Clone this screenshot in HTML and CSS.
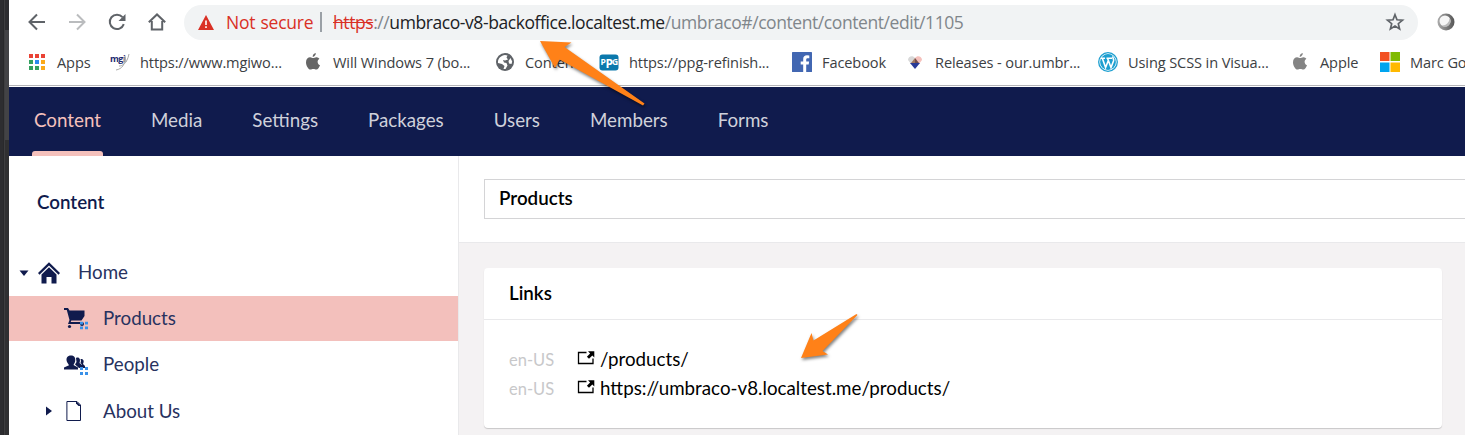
FILE: index.html
```html
<!DOCTYPE html>
<html lang="en">
<head>
<meta charset="utf-8">
<title>Products - Umbraco</title>
<link rel="stylesheet" href="styles.css">
</head>
<body>
<svg class="defs" width="0" height="0">
  <symbol id="apple" viewBox="0 0 14 18"><path d="M9.8 0C9.900 1.900 8.600 3.700 6.700 3.900 6.500 2 8 .3 9.800 0ZM7.100 5.100C8 5.100 9 4.100 10.600 4.200 11.800 4.300 12.800 4.800 13.400 5.700 10.800 7.300 11.100 10.900 14 12.200 13.300 14.300 11.800 16.500 10.400 16.500 9.200 16.500 8.700 15.900 7.400 15.900 6 15.900 5.500 16.600 4.300 16.600 2.600 16.600 0 13 0 9.300 0 6 2.100 4.300 4.100 4.300 5.500 4.300 6.400 5.100 7.100 5.100Z"/></symbol>
  <symbol id="open" viewBox="0 0 18 14"><path d="M9.500 1.500H1.500V12.500H16V7.500" fill="none" stroke="currentColor" stroke-width="1.300"/><path d="M11 .3H17.300V6.500L15.300 4.600 12 7.700 9.900 5.700 13.100 2.500Z"/></symbol>
  <symbol id="dots" viewBox="0 0 8 8"><path d="M0 0H3V3H0ZM5 0H8V3H5ZM0 5H3V8H0ZM5 5H8V8H5Z"/></symbol>
</svg>
<div class="screen">
  <div class="edge"><div class="edge-dark"></div><div class="edge-light"></div></div>
  <div class="window">
    <div class="toolbar">
      <svg class="nav-icon" viewBox="0 0 20 20"><path d="M18 10H3M10 2.500 2.500 10 10 17.500"/></svg>
      <svg class="nav-icon disabled" viewBox="0 0 20 20"><path d="M2 10H17M10 2.500 17.500 10 10 17.500"/></svg>
      <svg class="nav-icon" viewBox="0 0 20 20"><path d="M16.800 12.200A7.200 7.200 0 1 1 15.500 5.200"/><path class="solid" d="M18.500 2V9H11.500Z"/></svg>
      <svg class="nav-icon" viewBox="0 0 20 20"><path d="M1.800 10.300 10 2.500 18.200 10.300M4.800 9V17.600H15.200V9"/></svg>
      <div class="address">
        <svg class="warn" width="16" height="15" viewBox="0 0 16 15"><path d="M8 0 16 15H0Z" fill="#d93025"/><path d="M7.200 5.500H8.800V10H7.200ZM7.200 11.300H8.800V13H7.200Z" fill="#fff"/></svg>
        <span class="insecure">Not secure</span>
        <span class="divider"></span>
        <span class="url"><span class="scheme">https</span><span class="sep">://</span><span class="host">umbraco-v8-backoffice.localtest.me</span><span class="path">/umbraco#/content/content/edit/1105</span></span>
        <svg class="star" width="20" height="20" viewBox="0 0 20 20"><path d="M10 2.700 12 7.800 17.500 8.200 13.300 11.700 14.600 17 10 14.100 5.400 17 6.700 11.700 2.500 8.200 8 7.800Z" fill="none" stroke="#5f6368" stroke-width="1.700"/></svg>
      </div>
      <svg class="ext" width="18" height="18" viewBox="0 0 18 18"><defs><linearGradient id="g"><stop offset="0" stop-color="#aaa"/><stop offset="1" stop-color="#555"/></linearGradient></defs><circle cx="9" cy="9" r="8.500" fill="url(#g)"/><circle cx="8" cy="8" r="5.500" fill="#f6f6f6"/><path d="M12.500 5A5.500 5.500 0 0 1 4.500 12.400 7 7 0 0 0 12.500 5Z" fill="#bbb"/></svg>
    </div>
    <div class="bookmarks">
      <div class="bm w83"><svg class="fav" viewBox="0 0 20 20"><path fill="#ea4335" d="M2 2H6V6H2ZM8 2H12V6H8ZM14 2H18V6H14Z"/><path fill="#34a060" d="M2 8H6V12H2ZM2 14H6V18H2ZM8 14H12V18H8Z"/><path fill="#2b8af0" d="M8 8H12V12H8Z"/><path fill="#fba919" d="M14 8H18V12H14ZM14 14H18V18H14Z"/></svg><span>Apps</span></div>
      <div class="bm w193"><svg class="fav" viewBox="0 0 20 20"><text x="0" y="10" class="mgi">mgi</text><path d="M14 5C16 12 12 17 6 18M19 2C17 12 12 14 9 14M15 4 16 10" fill="none" stroke="#aaa"/></svg><span>https://www.mgiwo...</span></div>
      <div class="bm w192"><svg class="fav apple" viewBox="0 0 20 20"><use href="#apple" x="3" y="1" width="14" height="18"/></svg><span>Will Windows 7 (bo...</span></div>
      <div class="bm w104"><svg class="fav" viewBox="0 0 20 20"><circle cx="10" cy="10" r="9" fill="#5f6368"/><path d="M10 3 12.500 3.500 11.500 5.500 13 7.500 10 8.500 8 8 9 10.500 11.500 11 12.500 13.500 10.500 17 8.500 17 9.500 14 7 12 3 11C2.500 7 6 3.200 10 3ZM15.500 6 17.200 9.500 16.500 12 14 11.500 13.500 9Z" fill="#fff"/></svg><span>Conten</span></div>
      <div class="bm w193"><svg class="fav" viewBox="0 0 20 20"><rect x=".5" y="2.500" width="19" height="16" rx="3" fill="#0b78ac"/><text x="1.500" y="13" class="ppg" textLength="6">P</text><text x="6.500" y="15.500" class="ppg big">P</text><text x="13" y="13" class="ppg">G</text></svg><span>https://ppg-refinish...</span></div>
      <div class="bm w113"><svg class="fav" viewBox="0 0 20 20"><rect width="20" height="20" rx=".6" fill="#4267b2"/><path d="M11.200 20V12.400H8.700V9.400H11.200V7.100C11.200 4.500 12.700 3.300 15 3.300L17.300 3.400V6.200H15.700C14.500 6.200 14.200 6.800 14.200 7.700V9.400H17.100L16.700 12.400H14.200V20Z" fill="#fff"/></svg><span>Facebook</span></div>
      <div class="bm w193"><svg class="fav" viewBox="0 0 20 20"><path d="M10 6C8 3 3 4 3 8L6 12 10 9Z" fill="#d8d8d8"/><path d="M10 6C12 3 17 4 17 8L14 12 10 9Z" fill="#f5c1bc"/><path d="M10 6 6 11H10Z" fill="#a07860"/><path d="M10 6 14 11H10Z" fill="#704c4c"/><path d="M5 11H15L10 17Z" fill="#283a97"/></svg><span>Releases - our.umbr...</span></div>
      <div class="bm w192"><svg class="fav" viewBox="0 0 20 20"><circle cx="10" cy="10" r="9.300" fill="#fff" stroke="#1d9fd0" stroke-width="1.300"/><circle cx="10" cy="10" r="7.900" fill="#1d9fd0"/><path d="M2.800 6.300H7M8.500 6.300H14M4.300 6.300 7.600 15.500 10.500 8M9.500 6.300 13 15.500 15.500 9C16.200 7 14.500 6 14.800 4.500" fill="none" stroke="#fff" stroke-width="1.600"/></svg><span>Using SCSS in Visua...</span></div>
      <div class="bm w90"><svg class="fav apple light" viewBox="0 0 20 20"><use href="#apple" x="3" y="1" width="14" height="18"/></svg><span>Apple</span></div>
      <div class="bm"><svg class="fav" viewBox="0 0 20 20"><path fill="#f25022" d="M0 0H9.500V9H0Z"/><path fill="#7fba00" d="M10.500 0H20V9H10.500Z"/><path fill="#00a4ef" d="M0 10.500H9.500V20H0Z"/><path fill="#ffb900" d="M10.500 10.500H20V20H10.500Z"/></svg><span>Marc Go</span></div>
    </div>
    <nav class="sections">
      <a class="active">Content</a><a>Media</a><a>Settings</a><a>Packages</a><a>Users</a><a>Members</a><a>Forms</a>
    </nav>
    <div class="main">
      <aside class="tree">
        <h2>Content</h2>
        <div class="node root"><svg class="caret" viewBox="0 0 10 10"><path d="M.5 2.500H9.500L5 8Z"/></svg><svg class="icon home" viewBox="0 0 22 22"><path d="M0 11 11 .3 22 11 20.500 12.800 11 3.600 1.500 12.800Z"/><path d="M3.500 12.500 11 5.300 18.500 12.500V21.500H13.500V15H8.500V21.500H3.500Z"/></svg><span>Home</span></div>
        <div class="node child selected"><svg class="icon" viewBox="0 0 24 22"><path d="M0 0H4L5.500 2.500H20.500V8L17.500 12.500H7.300L6.700 14H18.500V16H4L5.500 12 2.800 2H0Z"/><circle cx="5.500" cy="18.500" r="1.600"/><circle cx="18" cy="16" r="2"/><use href="#dots" x="16" y="13.500" width="8" height="8" fill="#3a91e8"/></svg><span>Products</span></div>
        <div class="node child"><svg class="icon" viewBox="0 0 24 22"><path d="M3 8C1.500 4 3.500 1.500 7 1.500S12 4 11 8L9.500 11 14 13.500V15.500H0V13.500L5 11.200ZM12 4C15 2.500 17 5 15.500 9L18 11 19 14H15L11 10.500 12.500 8ZM16.500 5C19.500 4.500 20.500 7 19 10L21 12V14H18V10.500L16.500 9 17 7Z"/><use href="#dots" x="16" y="13" width="8" height="8" fill="#3a91e8"/></svg><span>People</span></div>
        <div class="node child branch"><svg class="caret" viewBox="0 0 10 10"><path d="M2 .5 8 5 2 9.500Z"/></svg><svg class="icon" viewBox="0 0 24 22"><path d="M2.900 1.500H13L16.500 5V20.500H2.900Z" fill="none" stroke="#101b4d" stroke-width="1"/><path d="M12 1 17 6H14.500L12 3.500Z"/></svg><span>About Us</span></div>
      </aside>
      <section class="editor">
        <header><div class="name">Products</div></header>
        <div class="content">
          <div class="card">
            <h3>Links</h3>
            <div class="links">
              <div class="link"><span class="lang">en-US</span><svg width="18" height="14"><use href="#open"/></svg><a>/products/</a></div>
              <div class="link"><span class="lang">en-US</span><svg width="18" height="14"><use href="#open"/></svg><a>https://umbraco-v8.localtest.me/products/</a></div>
            </div>
          </div>
        </div>
      </section>
    </div>
  </div>
  <svg class="arrows" viewBox="0 0 1465 435"><path d="M540 41 571.500 42.500 564.500 47 644.500 103.500 643 105.500 559.500 59.500 555 68Z"/><path d="M801 358 811.500 333 813.500 340.500 856.500 314 857.500 315 822.500 351 828 354.500Z"/></svg>
</div>
</body>
</html>
```
FILE: styles.css
```css
* { box-sizing: border-box; }
body { margin: 0; overflow: hidden; font-family: Lato, sans-serif; }
.defs { display: block; position: absolute; }
.screen { position: relative; display: flex; width: 1465px; height: 435px; overflow: hidden; background: #fff; }
.edge { display: flex; flex: none; width: 9px; background: #2d2d30; }
.edge-dark { width: 4px; border-right: 1px solid #29292b; }
.edge-light { width: 5px; background: linear-gradient(#2d2d30 30px, #434346 30px, #434346 140px, #303032 140px); border-left: 1px solid #3e3e40; }
.window { flex: 1; min-width: 0; display: flex; flex-direction: column; }

.toolbar { display: flex; align-items: center; height: 40px; margin-top: 2px; padding-left: 18px; flex: none; }
.nav-icon { width: 20px; height: 20px; margin-right: 20px; flex: none; fill: none; stroke: #5f6368; stroke-width: 2; }
.nav-icon.disabled { stroke: #babcbe; }
.nav-icon .solid { fill: #5f6368; stroke: none; }
.address { display: flex; align-items: center; width: 1234px; height: 35px; margin-left: -3px; padding: 0 13px 0 14px; border-radius: 18px; background: #f1f3f4; font: 17.5px "Open Sans", sans-serif; white-space: nowrap; flex: none; }
.insecure { width: 94px; margin-left: 12px; color: #d93025; letter-spacing: -.5px; word-spacing: 1px; }
.insecure { letter-spacing: -.25px; }
.divider { width: 2px; height: 20px; background: #9aa0a6; }
.url { flex: 1; margin-left: 11px; color: #80868b; letter-spacing: -.42px; }
.scheme { color: #d93025; text-decoration: line-through; }
.host { color: #202124; }
.ext { margin-left: 19px; }

.bookmarks { display: flex; align-items: center; height: 44px; margin-bottom: 1px; padding: 0 0 3px 18px; border-bottom: 1px solid #b4b4b8; flex: none; }
.bm { display: flex; align-items: center; gap: 10px; flex: none; font: 14.6px "Open Sans", sans-serif; color: #3c4043; white-space: nowrap; letter-spacing: -.12px; }
.fav { width: 20px; height: 20px; flex: none; }
.apple { fill: #666; }
.apple.light { fill: #848484; }
.mgi { font: bold 9px "Open Sans", sans-serif; fill: #1c2a70; letter-spacing: -.5px; }
.ppg { font: bold 8.5px "Open Sans", sans-serif; fill: #fff; letter-spacing: 0; }
.ppg.big { font-size: 12px; }
.w83 { width: 83px; }
.w90 { width: 90px; }
.w104 { width: 104px; }
.w113 { width: 113px; }
.w192 { width: 192px; }
.w193 { width: 193px; }

.sections { display: flex; gap: 46px; height: 69px; padding-left: 23px; background: #101b4d; flex: none; }
.sections a { display: flex; align-items: center; padding: 0 2px 4px; color: #cfd1db; font-size: 18.75px; }
.sections .active { position: relative; color: #f5c1bc; }
.sections .active::after { content: ""; position: absolute; left: 0; right: 0; bottom: 0; height: 5px; border-radius: 3px 3px 0 0; background: #f5c1bc; }

.main { display: flex; flex: 1; min-height: 0; }
.tree { width: 450px; border-right: 1px solid #e9e9eb; color: #101b4d; flex: none; }
.tree h2 { margin: 0; padding: 34px 0 0 28px; height: 94px; font-size: 18.75px; line-height: 23px; font-weight: 600; }
.node { display: flex; align-items: center; height: 46px; padding-bottom: 1px; font-size: 18.75px; fill: #101b4d; }
.node span { margin-top: -2px; color: #28325f; }
.node.selected { height: 45px; margin-bottom: 1px; padding-bottom: 0; background: #f3c0bc; }
.root { padding-left: 10px; }
.caret { width: 10px; height: 10px; }
.home { width: 22px; height: 22px; margin: 0 18px 0 9px; }
.child { padding-left: 55px; }
.child .icon { width: 24px; height: 22px; margin-right: 15px; }
.branch { padding-left: 35px; padding-bottom: 0; }
.branch .caret { margin-right: 10px; }

.editor { flex: 1; min-width: 0; display: flex; flex-direction: column; background: #f4f2f3; }
.editor header { height: 87px; padding: 23px 0 0 25px; background: #fff; border-bottom: 1px solid #e9e9eb; flex: none; }
.name { height: 40px; padding: 0 14px; border: 1px solid #d4d4d6; border-right: 0; line-height: 35px; font-size: 18.75px; font-weight: 600; color: #000; }
.content { padding: 25px 23px 0 25px; }
.card { height: 160px; border-radius: 4px; background: #fff; box-shadow: 0 1px 1px rgba(0,0,0,.18); color: #000; }
.card h3 { height: 52px; margin: 0; padding-left: 25px; border-bottom: 1px solid #e9e9eb; line-height: 49px; font-size: 18.75px; font-weight: 600; }
.links { padding: 25px 0 0 25px; }
.link { display: flex; align-items: center; height: 29px; font-size: 18.75px; }
.link a { margin-top: -2px; }
.link svg { margin: -3px 5px 0 0; }
.lang { width: 68px; color: #c8c8ca; font-size: 16.5px; }

.arrows { position: absolute; left: 0; top: 0; width: 1465px; height: 435px; fill: #ff8118; filter: drop-shadow(1px 2px 1.500px rgba(0,0,0,.5)); pointer-events: none; }
```
